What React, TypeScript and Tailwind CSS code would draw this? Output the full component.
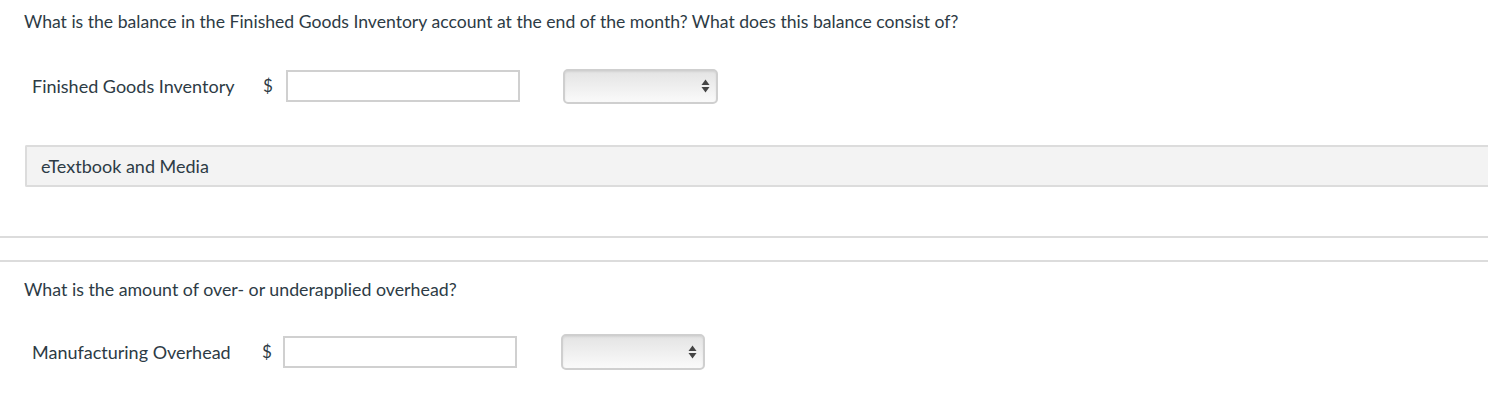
import React from "react";

function SelectBox({ w, h }: { w: string; h: string }) {
  return (
    <div
      className={`relative ${h} ${w} rounded-[5px] border-2 border-[#cfcfcf] bg-gradient-to-b from-[#e4e4e4] via-[#efefef] to-[#fafafa] shadow-[inset_0_1px_2px_rgba(0,0,0,0.08)]`}
    >
      <svg
        className="absolute right-[6px] top-1/2 -translate-y-1/2"
        width="9"
        height="15"
        viewBox="0 0 9 15"
      >
        <path d="M4.5 1 L8.5 6.5 L0.5 6.5 Z" fill="#444" />
        <path d="M4.5 14 L8.5 8.5 L0.5 8.5 Z" fill="#444" />
      </svg>
    </div>
  );
}

function AnswerRow({
  label,
  labelW,
  dollarW,
  inputW,
  gapW,
  selectW,
  selectH,
}: {
  label: string;
  labelW: string;
  dollarW: string;
  inputW: string;
  gapW: string;
  selectW: string;
  selectH: string;
}) {
  return (
    <div className="flex items-center pl-[32px] h-[34px]">
      <span className={`${labelW} text-[18px] leading-[22px] text-[#2d3b45]`}>{label}</span>
      <span className={`${dollarW} text-[17px] leading-[22px] text-[#2d3b45]`}>$</span>
      <div className={`h-[32px] ${inputW} border-2 border-[#d0d0d0] bg-white`} />
      <div className={gapW} />
      <SelectBox w={selectW} h={selectH} />
    </div>
  );
}

export default function App() {
  return (
    <div
      className="w-[1488px] h-[404px] overflow-hidden bg-white text-[#2d3b45]"
      style={{ fontFamily: "Lato, 'Open Sans', sans-serif" }}
    >
      <div className="pt-[11px] pl-[24px] text-[17.6px] leading-[22px]">
        What is the balance in the Finished Goods Inventory account at the end of the month? What does this balance consist of?
      </div>
      <div className="mt-[36px]">
        <AnswerRow
          label="Finished Goods Inventory"
          labelW="w-[231px]"
          dollarW="w-[23px]"
          inputW="w-[234px]"
          gapW="w-[43px]"
          selectW="w-[155px]"
          selectH="h-[35px]"
        />
      </div>
      <div className="mt-[42px] ml-[25px] h-[42px] flex items-center border-y-2 border-l-2 border-[#dcdcdc] bg-[#f3f3f3] pl-[14px] rounded-l-[2px] text-[18px]">
        eTextbook and Media
      </div>
      <div className="mt-[49px] h-[2px] bg-[#dcdcdc]" />
      <div className="mt-[22px] h-[2px] bg-[#dcdcdc]" />
      <div className="pt-[16px] pl-[24px] text-[17.8px] leading-[22px]">
        What is the amount of over- or underapplied overhead?
      </div>
      <div className="mt-[35px]">
        <AnswerRow
          label="Manufacturing Overhead"
          labelW="w-[230px]"
          dollarW="w-[21px]"
          inputW="w-[234px]"
          gapW="w-[44px]"
          selectW="w-[144px]"
          selectH="h-[36px]"
        />
      </div>
    </div>
  );
}
